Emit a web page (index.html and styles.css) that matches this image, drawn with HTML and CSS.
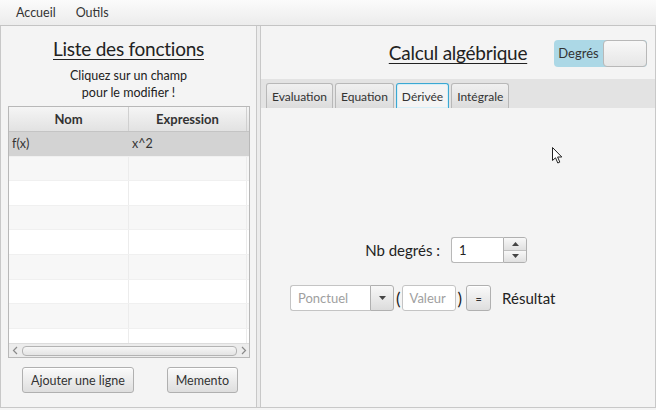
FILE: index.html
```html
<!DOCTYPE html>
<html lang="fr">
<head>
<meta charset="utf-8">
<title>Calcul</title>
<link rel="stylesheet" href="styles.css">
</head>
<body>
<div class="app">
  <div class="menubar">
    <span class="menu-item">Accueil</span>
    <span class="menu-item">Outils</span>
  </div>
  <div class="main">
    <div class="left">
      <div class="ltitle">Liste des fonctions</div>
      <div class="lsub">Cliquez sur un champ<br>pour le modifier !</div>
      <div class="table">
        <div class="thead">
          <div class="th c1">Nom</div>
          <div class="th c2">Expression</div>
          <div class="th c3"></div>
        </div>
        <div class="tbody">
          <div class="tr sel"><div class="td c1">f(x)</div><div class="td c2">x^2</div></div>
          <div class="tr odd"><div class="td c1"></div><div class="td c2"></div></div>
          <div class="tr"><div class="td c1"></div><div class="td c2"></div></div>
          <div class="tr odd"><div class="td c1"></div><div class="td c2"></div></div>
          <div class="tr"><div class="td c1"></div><div class="td c2"></div></div>
          <div class="tr odd"><div class="td c1"></div><div class="td c2"></div></div>
          <div class="tr"><div class="td c1"></div><div class="td c2"></div></div>
          <div class="tr odd"><div class="td c1"></div><div class="td c2"></div></div>
          <div class="tr"><div class="td c1"></div><div class="td c2"></div></div>
        </div>
        <div class="hscroll">
          <svg class="sarrow" width="6" height="9" viewBox="0 0 6 9"><path d="M5 1 L1.5 4.5 L5 8" fill="none" stroke="#8a8a8a" stroke-width="1.2"/></svg>
          <div class="thumb"></div>
          <svg class="sarrow" width="6" height="9" viewBox="0 0 6 9"><path d="M1 1 L4.5 4.5 L1 8" fill="none" stroke="#8a8a8a" stroke-width="1.2"/></svg>
        </div>
      </div>
      <div class="lbuttons">
        <div class="btn">Ajouter une ligne</div>
        <div class="btn">Memento</div>
      </div>
    </div>
    <div class="divider"></div>
    <div class="right">
      <div class="rheader">
        <div></div>
        <div class="rtitle">Calcul algébrique</div>
        <div class="toggle">
          <span class="tlabel">Degrés</span>
          <span class="tknob"></span>
        </div>
      </div>
      <div class="tabbar">
        <div class="tab">Evaluation</div>
        <div class="tab">Equation</div>
        <div class="tab active">Dérivée</div>
        <div class="tab">Intégrale</div>
      </div>
      <div class="content">
        <div class="row1">
          <div class="nblabel">Nb degrés :</div>
          <div class="spinner">
            <div class="sfield">1</div>
            <div class="sbtns">
              <div class="sbtn up"><svg width="7" height="4" viewBox="0 0 7 4"><path d="M0 4 L3.5 0 L7 4 Z" fill="#444"/></svg></div>
              <div class="sbtn"><svg width="7" height="4" viewBox="0 0 7 4"><path d="M0 0 L3.5 4 L7 0 Z" fill="#444"/></svg></div>
            </div>
          </div>
        </div>
        <div class="row2">
          <div class="combo">
            <div class="cfield">Ponctuel</div>
            <div class="cbtn"><svg width="7" height="4" viewBox="0 0 7 4"><path d="M0 0 L3.5 4 L7 0 Z" fill="#444"/></svg></div>
          </div>
          <span class="paren">(</span>
          <div class="vfield">Valeur</div>
          <span class="paren">)</span>
          <div class="btn eq">=</div>
          <span class="result">Résultat</span>
        </div>
      </div>
    </div>
  </div>
  <svg class="cursor" width="12" height="18" viewBox="0 0 12 18"><path d="M0.5 0.5 L0.5 13.5 L3.5 10.8 L5.8 16 L7.8 15.1 L5.6 10 L9.8 10 Z" fill="#fff" stroke="#222" stroke-width="1"/></svg>
</div>
</body>
</html>
```
FILE: styles.css
```css
* { box-sizing: border-box; }
html, body { margin: 0; padding: 0; }
body {
  width: 656px;
  height: 410px;
  overflow: hidden;
  background: #f4f4f4;
  font-family: "Lato", "Open Sans", sans-serif;
  color: #333;
  font-size: 12.5px;
}
.app { position: relative; width: 656px; height: 410px; display: flex; flex-direction: column; }
.menubar {
  height: 26px;
  flex: none;
  background: linear-gradient(#fbfbfb, #ececec);
  border-bottom: 1px solid #c4c4c4;
  display: flex;
  align-items: center;
  padding-left: 16px;
  gap: 20px;
  padding-bottom: 1px;
}
.menu-item { font-size: 12.5px; color: #333; }
.main {
  flex: 1;
  display: flex;
  border-left: 1px solid #c8c8c8;
  border-right: 1px solid #c8c8c8;
  border-bottom: 1px solid #c8c8c8;
  margin-bottom: 2px;
}
.left {
  width: 256px;
  flex: none;
  border-right: 1px solid #c8c8c8;
  display: flex;
  flex-direction: column;
  align-items: center;
  padding-top: 10px;
}
.ltitle, .rtitle {
  font-size: 19px;
  letter-spacing: -0.25px;
  line-height: 26px;
  text-decoration: underline;
  text-decoration-thickness: 1px;
  text-underline-offset: 3px;
  color: #222;
}
.lsub { margin-top: 5px; font-size: 12.5px; line-height: 17px; text-align: center; color: #222; }
.table {
  margin-top: 5px;
  width: 242px;
  height: 252px;
  align-self: flex-start;
  margin-left: 7px;
  border: 1px solid #b8b8b8;
  background: #fff;
  display: flex;
  flex-direction: column;
  overflow: hidden;
}
.thead {
  height: 25px;
  flex: none;
  display: flex;
  background: linear-gradient(#f5f5f5, #e2e2e2);
  border-bottom: 1px solid #c4c4c4;
}
.th {
  font-weight: bold;
  font-size: 13px;
  display: flex;
  align-items: center;
  justify-content: center;
  color: #333;
}
.c1 { width: 120px; flex: none; border-right: 1px solid #d0d0d0; }
.c2 { width: 118px; flex: none; border-right: 1px solid #d0d0d0; }
.c3 { flex: 1; border-right: none; }
.tbody { flex: 1; overflow: hidden; }
.tr { height: 24.6px; display: flex; background: #fff; border-bottom: 1px solid #f0f0f0; }
.tr.odd { background: #f7f7f7; }
.tr.sel { background: #d3d3d3; }
.td {
  display: flex;
  align-items: center;
  padding-left: 3px;
  font-size: 12.5px;
  color: #333;
  border-right: 1px solid #ececec;
}
.tr.sel .td { border-right-color: #d3d3d3; }
.hscroll {
  height: 14px;
  flex: none;
  background: #ececec;
  border-top: 1px solid #dcdcdc;
  display: flex;
  align-items: center;
  padding: 0 2px 0 3px;
  gap: 4px;
}
.sarrow { flex: none; }
.thumb {
  flex: 1;
  height: 10px;
  border: 1px solid #b3b3b3;
  border-radius: 4px;
  background: linear-gradient(#f6f6f6, #e4e4e4);
}
.lbuttons {
  margin-top: 9px;
  width: 100%;
  display: flex;
  justify-content: space-between;
  padding: 0 18px 0 21px;
}
.btn {
  height: 26px;
  padding: 0 8px;
  display: flex;
  align-items: center;
  justify-content: center;
  border: 1px solid #b0b0b0;
  border-radius: 3px;
  background: linear-gradient(#fafafa, #dedede);
  font-size: 12.5px;
  color: #333;
  box-shadow: inset 0 1px 0 #ffffff;
}
.divider {
  width: 3px;
  flex: none;
  background: #ececec;
}
.right {
  flex: 1;
  border-left: 1px solid #c8c8c8;
  display: flex;
  flex-direction: column;
}
.rheader {
  height: 53px;
  flex: none;
  display: grid;
  grid-template-columns: 1fr auto 1fr;
  align-items: center;
  padding-top: 1px;
}
.toggle {
  justify-self: end;
  margin-right: 8px;
  width: 93px;
  height: 27px;
  display: flex;
  border-radius: 4px;
  background: #acd8e6;
  align-items: stretch;
}
.tlabel {
  width: 49px;
  display: flex;
  align-items: center;
  justify-content: center;
  font-size: 13px;
  color: #333;
}
.tknob {
  flex: 1;
  border: 1px solid #b8b8b8;
  border-radius: 4px;
  background: linear-gradient(#f8f8f8, #e6e6e6);
}
.tabbar {
  height: 29px;
  flex: none;
  background: #e3e3e3;
  display: flex;
  align-items: flex-end;
  padding-left: 5px;
  gap: 2px;
}
.tab {
  height: 25px;
  padding: 0 5px;
  display: flex;
  align-items: center;
  border: 1px solid #b8b8b8;
  border-bottom: none;
  border-radius: 3px 3px 0 0;
  background: linear-gradient(#f0f0f0, #dcdcdc);
  font-size: 12px;
  color: #333;
}
.tab.active {
  background: #f4f4f4;
  border: 1px solid #3ba8d3;
  border-bottom: none;
  box-shadow: inset 0 0 0 1px #d6eef7;
}
.content {
  flex: 1;
  display: flex;
  flex-direction: column;
  padding-top: 129px;
}
.row1 { display: flex; align-items: center; height: 26px; }
.nblabel { width: 179px; text-align: right; font-size: 15px; color: #222; }
.spinner { margin-left: 11px; display: flex; height: 26px; width: 76px; }
.sfield {
  width: 52px;
  border: 1px solid #b8b8b8;
  border-right: none;
  border-radius: 3px 0 0 3px;
  background: #fff;
  display: flex;
  align-items: center;
  padding-left: 7px;
  font-size: 13px;
  color: #222;
}
.sbtns {
  flex: 1;
  display: flex;
  flex-direction: column;
  border: 1px solid #b0b0b0;
  border-radius: 0 3px 3px 0;
  overflow: hidden;
}
.sbtn {
  flex: 1;
  display: flex;
  align-items: center;
  justify-content: center;
  background: linear-gradient(#f8f8f8, #e0e0e0);
}
.sbtn.up { border-bottom: 1px solid #c0c0c0; }
.row2 { margin-top: 22px; display: flex; align-items: center; height: 26px; padding-left: 29px; }
.combo { display: flex; width: 104px; height: 26px; }
.cfield {
  width: 80px;
  border: 1px solid #c4c4c4;
  border-right: none;
  border-radius: 3px 0 0 3px;
  background: #fff;
  display: flex;
  align-items: center;
  padding-left: 7px;
  color: #a0a0a0;
  font-size: 13px;
}
.cbtn {
  flex: 1;
  border: 1px solid #b0b0b0;
  border-radius: 0 3px 3px 0;
  background: linear-gradient(#f8f8f8, #dcdcdc);
  display: flex;
  align-items: center;
  justify-content: center;
}
.paren { font-size: 17px; color: #222; margin: 0 1px 0 2px; }
.vfield {
  width: 54px;
  height: 26px;
  border: 1px solid #c4c4c4;
  border-radius: 3px;
  background: #fff;
  display: flex;
  align-items: center;
  padding-left: 7px;
  color: #a0a0a0;
  font-size: 13px;
}
.btn.eq { width: 25px; padding: 0; margin-left: 3px; font-size: 11px; }
.result { margin-left: 11px; font-size: 15px; color: #222; }
.cursor { position: absolute; left: 552px; top: 147px; }
```
